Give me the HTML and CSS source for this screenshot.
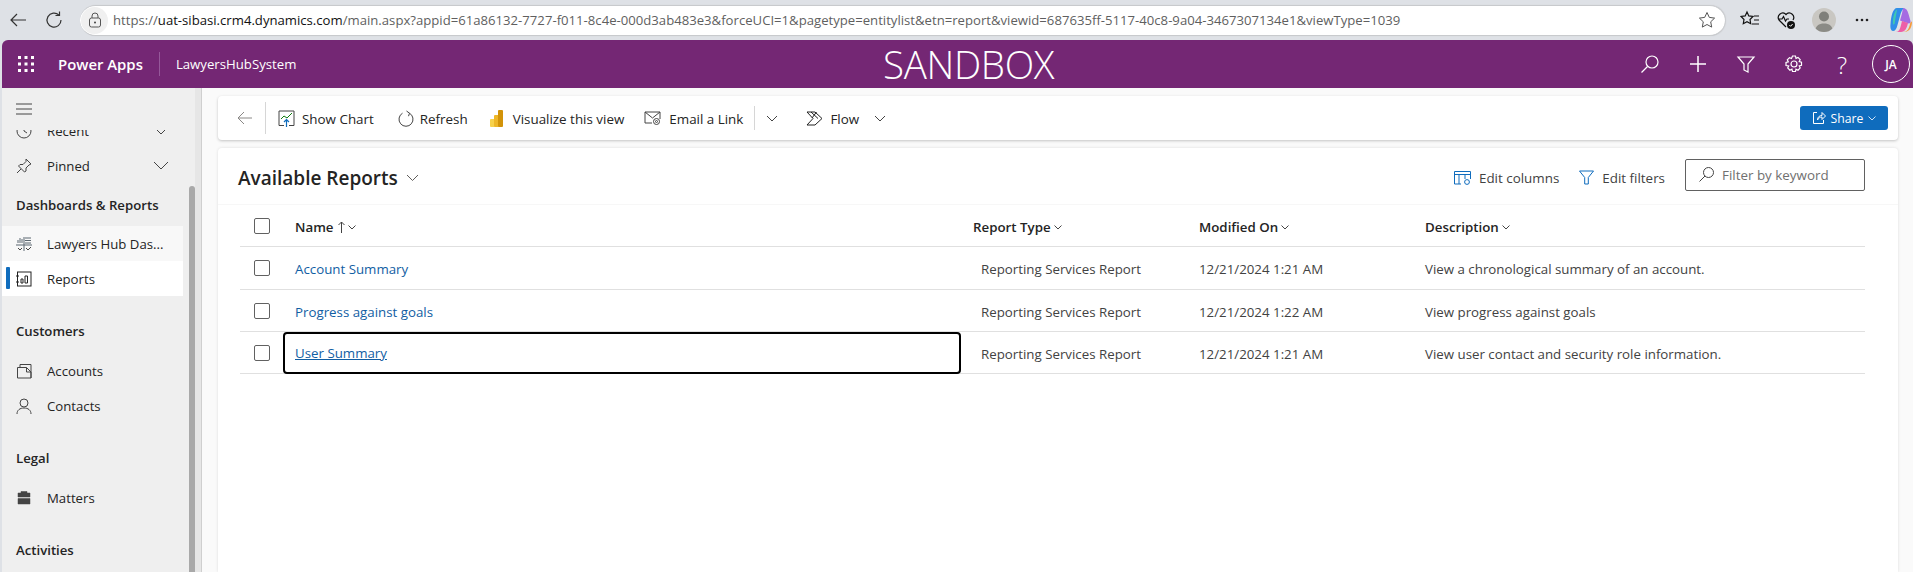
FILE: index.html
```html
<!DOCTYPE html>
<html lang="en">
<head>
<meta charset="utf-8">
<title>Available Reports</title>
<link rel="stylesheet" href="styles.css">
</head>
<body>
<div class="browser">
  <svg class="bicon back" width="20" height="20" viewBox="0 0 20 20"><path d="M18 10H3M9 4l-6 6 6 6" class="ln"/></svg>
  <svg class="bicon reload" width="20" height="20" viewBox="0 0 20 20"><path d="M15 5.200A7 7 0 1 0 17 10M15.500 1.500v4h-4" class="ln"/></svg>
  <div class="address">
    <span class="lockwrap"><svg width="14" height="16" viewBox="0 0 14 16"><rect x="1.500" y="6" width="11" height="9" rx="2" class="ln1"/><path d="M4 6V4a3 3 0 0 1 6 0v2" class="ln1"/><circle cx="7" cy="10.500" r="1" fill="#444"/></svg></span>
    <span class="url"><span class="dim">https://</span>uat-sibasi.crm4.dynamics.com<span class="dim">/main.aspx?appid=61a86132-7727-f011-8c4e-000d3ab483e3&amp;forceUCI=1&amp;pagetype=entitylist&amp;etn=report&amp;viewid=687635ff-5117-40c8-9a04-3467307134e1&amp;viewType=1039</span></span>
    <svg class="star" width="18" height="18" viewBox="0 0 18 18"><path d="M9 1.500l2.300 4.900 5.300.7-3.900 3.700 1 5.300L9 13.500l-4.700 2.600 1-5.300-3.900-3.700 5.300-.7z" class="ln1"/></svg>
  </div>
  <div class="tools">
    <svg width="20" height="20" viewBox="0 0 20 20"><path d="M7 2l1.800 3.900 4.200.6-3 3 .7 4.200L7 11.700l-3.700 2 .7-4.200-3-3 4.200-.6z" class="ln2"/><path d="M14 6h5M14 10h5M12 14h7" class="ln2"/></svg>
    <svg width="20" height="20" viewBox="0 0 20 20"><path d="M10 17L3 10a4.500 4.500 0 0 1 6.500-6l.5.600.5-.6A4.500 4.500 0 0 1 17 10M2 9h4l1.500-2.500 2 4.500 1.500-2h2" class="ln2"/><circle cx="15" cy="15" r="4" fill="#111"/><path d="M13.300 15l1.300 1.300 2-2.300" stroke="#fff" fill="none"/></svg>
    <span class="profile"><svg width="24" height="24" viewBox="0 0 24 24"><circle cx="12" cy="8.500" r="5" fill="#7f7f7a"/><path d="M3 24c0-6 4-8.500 9-8.500s9 2.500 9 8.500z" fill="#8b8b86"/></svg></span>
    <svg class="dots" width="14" height="4" viewBox="0 0 14 4" fill="#222"><circle cx="2" cy="2" r="1.300"/><circle cx="7" cy="2" r="1.300"/><circle cx="12" cy="2" r="1.300"/></svg>
    <svg class="copilot" width="22" height="26" viewBox="0 0 22 26"><path d="M7 1h8c-3 1-4 4-5 8l-2.500 9c-1 4-2.500 6-4.500 6-2 0-3-3-2.500-7C1 9 3 1 7 1z" fill="#2f8ee8"/><path d="M3 17C2.500 11 4.500 4 7 2.500 6.500 6 5.500 11 4.800 16c-.3 1.500-1.500 2-1.800 1z" fill="#3fc7b0"/><path d="M13 1c3 0 4.500 2 5.500 6l2 7c.5 2.500-1.500 3-3.500 2l-7-2.500 2-7c.6-3 1-5.500 1-5.500z" fill="#a56be2"/><path d="M8 25h5c4 0 6-3 7-8 .4-1.500 1-2.500 2-2.500 0 5-2 10.500-8 10.500z" fill="#f59a3c"/><path d="M6 25c3 0 4-3 5-7l1-4 6 2c-1 5-3 9-7 9z" fill="#ee5fa7"/></svg>
  </div>
</div>

<header class="appbar">
  <svg class="waffle" width="16" height="16" viewBox="0 0 16 16" fill="#fff"><rect x="0" y="0" width="3" height="3"/><rect x="6.500" y="0" width="3" height="3"/><rect x="13" y="0" width="3" height="3"/><rect x="0" y="6.500" width="3" height="3"/><rect x="6.500" y="6.500" width="3" height="3"/><rect x="13" y="6.500" width="3" height="3"/><rect x="0" y="13" width="3" height="3"/><rect x="6.500" y="13" width="3" height="3"/><rect x="13" y="13" width="3" height="3"/></svg>
  <span class="brand">Power Apps</span>
  <span class="brand-sep"></span>
  <span class="appname">LawyersHubSystem</span>
  <span class="sandbox">SANDBOX</span>
  <div class="appicons">
    <svg width="20" height="20" viewBox="0 0 20 20"><circle cx="12" cy="8" r="6" class="wl"/><path d="M7.500 12.500L1.500 18.500" class="wl"/></svg>
    <svg width="20" height="20" viewBox="0 0 20 20"><path d="M10 2v16M2 10h16" class="wl2"/></svg>
    <svg width="20" height="20" viewBox="0 0 20 20"><path d="M2 3h16l-6 7v8l-4-2v-6z" class="wl"/></svg>
    <svg width="20" height="20" viewBox="0 0 20 20"><circle cx="10" cy="10" r="3" class="wl"/><path d="M8.500 2h3l.5 2.300 2-.9 2.200 2.200-1 2 2.300.7v3l-2.300.6 1 2.100-2.200 2.200-2-1-.5 2.300h-3l-.6-2.300-2 1-2.200-2.200 1-2.100L2 11.500v-3l2.300-.7-1-2 2.200-2.200 2 .9z" class="wl"/></svg>
    <span class="qmark">?</span>
    <span class="avatar">JA</span>
  </div>
</header>

<div class="shell">
  <aside class="sidebar">
    <div class="burger"><svg width="16" height="12" viewBox="0 0 16 12"><path d="M0 1h16M0 6h16M0 11h16" stroke="#444" fill="none"/></svg></div>
    <nav class="navclip">
      <div class="navlist">
        <div class="navitem"><svg class="ni" width="16" height="16" viewBox="0 0 16 16"><circle cx="8" cy="8" r="7" class="dk"/><path d="M8 4v4l3 2" class="dk"/></svg><span class="nt">Recent</span><svg class="nchev big" width="16" height="9" viewBox="0 0 16 9"><path d="M1 1l7 7 7-7" class="dk"/></svg></div>
        <div class="navitem"><svg class="ni" width="16" height="16" viewBox="0 0 16 16"><path d="M10 1l5 5-2 1-3 3v3l-1.500 1-6-6L4 6.500h3l3-3zM5 11l-4 4" class="dk"/></svg><span class="nt">Pinned</span><svg class="nchev big" width="16" height="9" viewBox="0 0 16 9"><path d="M1 1l7 7 7-7" class="dk"/></svg></div>
        <h3 class="navhead first">Dashboards &amp; Reports</h3>
        <div class="navitem hover"><svg class="ni" width="16" height="16" viewBox="0 0 16 16"><path d="M2 4v3M4 2v5M6 3v4M9 2h6M9 4.500h6M9 7h6M0 9h16M8 1v14" class="bar"/><path d="M2 12l2 2 2-2M10 12l2 2 3-3" class="dk"/></svg><span class="nt">Lawyers Hub Das...</span></div>
        <div class="navitem active"><svg class="ni" width="16" height="16" viewBox="0 0 16 16"><rect x="1.500" y="1" width="13.500" height="14" class="bk"/><path d="M5 8h2v4H5zM9 5h2.500v7H9zM0 5h3M0 11h3" class="bk"/></svg><span class="nt">Reports</span></div>
        <h3 class="navhead">Customers</h3>
        <div class="navitem"><svg class="ni" width="16" height="16" viewBox="0 0 16 16"><path d="M1.500 4.500h9L15 9v6H1.500zM4 4.500V1.500h11V15M10.500 4.500V9H15" class="dk"/></svg><span class="nt">Accounts</span></div>
        <div class="navitem"><svg class="ni" width="16" height="16" viewBox="0 0 16 16"><circle cx="8" cy="5" r="4" class="dk"/><path d="M1 16c0-4 3-6 7-6s7 2 7 6" class="dk"/></svg><span class="nt">Contacts</span></div>
        <h3 class="navhead">Legal</h3>
        <div class="navitem"><svg class="ni" width="16" height="16" viewBox="0 0 16 16"><path d="M5 3V1.500h6V3h3v4H2V3zM2 8.500h12V14H2z" fill="#444" stroke="#444" stroke-width=".5"/></svg><span class="nt">Matters</span></div>
        <h3 class="navhead">Activities</h3>
      </div>
    </nav>
    <div class="scrollthumb"></div>
  </aside>

  <main class="content">
    <section class="cmdbar">
      <svg class="cback" width="16" height="16" viewBox="0 0 16 16"><path d="M15 8H1M7 2L1 8l6 6" stroke="#8a8886" fill="none"/></svg>
      <span class="csep first"></span>
      <div class="cmd show"><svg width="17" height="17" viewBox="0 0 17 17"><path d="M6 15.500H1V1h15v14.500h-5" class="dk"/><path d="M3 9l3-3 3 2 5-5" stroke="#107c10" fill="none"/><path d="M8.500 17V10M6 12l2.500-2.500L11 12" stroke="#0f6cbd" fill="none" stroke-width="1.200"/></svg><span>Show Chart</span></div>
      <div class="cmd refresh"><svg width="16" height="17" viewBox="0 0 16 17"><path d="M4.500 3.200A7 7 0 1 0 11.500 3.200M8.500 1l3 2.200-1 3" class="dk"/></svg><span>Refresh</span></div>
      <div class="cmd viz"><svg width="13" height="17" viewBox="0 0 13 17"><rect x="0" y="9" width="5" height="8" rx="1" fill="#f7d24c"/><rect x="4" y="5" width="5" height="12" rx="1" fill="#eeb728"/><rect x="8" y="0" width="5" height="17" rx="1" fill="#d29309"/></svg><span>Visualize this view</span></div>
      <div class="cmd email"><svg width="17" height="16" viewBox="0 0 17 16"><path d="M8 13H1V2h15v7M1 2l7.500 6L16 2" class="dk"/><circle cx="12.500" cy="11.500" r="3" class="dk"/><circle cx="12.500" cy="11.500" r="1" class="dk"/></svg><span>Email a Link</span></div>
      <span class="csep second"></span>
      <svg class="cchev one" width="12" height="7" viewBox="0 0 12 7"><path d="M1 1l5 5 5-5" class="dk"/></svg>
      <div class="cmd flow"><svg width="17" height="15" viewBox="0 0 17 15"><path d="M1 1h8l7 6.500-7 6.500H1l6-6.500zM5 1l7 6.500M10.500 1L6 7" class="bk"/></svg><span>Flow</span></div>
      <svg class="cchev" width="12" height="7" viewBox="0 0 12 7"><path d="M1 1l5 5 5-5" class="dk"/></svg>
      <button class="share"><svg width="14" height="14" viewBox="0 0 14 14"><path d="M5 1.500H1.500v11h10V9M5.500 9c0-3 2-4.500 4.500-4.500V1.500L13.500 5 10 8.500V6C8 6 6.500 7 5.500 9z" stroke="#fff" fill="none"/></svg><span>Share</span><svg width="8" height="5" viewBox="0 0 8 5"><path d="M.5.500L4 4l3.500-3.500" stroke="#cfe2f5" fill="none"/></svg></button>
    </section>

    <section class="listcard">
      <div class="titlebar">
        <h1>Available Reports</h1>
        <svg class="tchev" width="13" height="8" viewBox="0 0 13 8"><path d="M1 1l5.500 5.500L12 1" stroke="#605e5c" fill="none"/></svg>
        <div class="tactions">
          <span class="act"><svg width="17" height="14" viewBox="0 0 17 14"><path d="M7 13H.5V.5h16V8M.5 3.500h16M5 3.500V13M11 3.500V8" class="bl"/><circle cx="13" cy="11" r="2.400" class="bl"/></svg>Edit columns</span>
          <span class="act"><svg width="15" height="15" viewBox="0 0 15 15"><path d="M.5 1h14l-5.200 6.500V14H5.700V7.500z" class="bl"/></svg>Edit filters</span>
          <div class="filterbox"><svg width="15" height="15" viewBox="0 0 15 15"><circle cx="9.500" cy="5.500" r="5" class="dk"/><path d="M6 9L.5 14.500" class="dk"/></svg><span>Filter by keyword</span></div>
        </div>
      </div>

      <div class="grid">
        <div class="row head">
          <div class="c-check"><span class="box"></span></div>
          <div class="c-name">Name<svg class="arrow" width="7" height="12" viewBox="0 0 7 12"><path d="M3.500 12V1M.5 4l3-3 3 3" stroke="#424242" fill="none"/></svg><svg class="hchev" width="8" height="5" viewBox="0 0 8 5"><path d="M.5.500L4 4l3.500-3.500" class="dk"/></svg></div>
          <div class="c-cell">Report Type<svg class="hchev" width="8" height="5" viewBox="0 0 8 5"><path d="M.5.500L4 4l3.500-3.500" class="dk"/></svg></div>
          <div class="c-cell">Modified On<svg class="hchev" width="8" height="5" viewBox="0 0 8 5"><path d="M.5.500L4 4l3.500-3.500" class="dk"/></svg></div>
          <div class="c-cell">Description<svg class="hchev" width="8" height="5" viewBox="0 0 8 5"><path d="M.5.500L4 4l3.500-3.500" class="dk"/></svg></div>
        </div>
        <div class="row">
          <div class="c-check"><span class="box"></span></div>
          <div class="c-name"><a class="link">Account Summary</a></div>
          <div class="c-cell type">Reporting Services Report</div>
          <div class="c-cell">12/21/2024 1:21 AM</div>
          <div class="c-cell">View a chronological summary of an account.</div>
        </div>
        <div class="row">
          <div class="c-check"><span class="box"></span></div>
          <div class="c-name"><a class="link">Progress against goals</a></div>
          <div class="c-cell type">Reporting Services Report</div>
          <div class="c-cell">12/21/2024 1:22 AM</div>
          <div class="c-cell">View progress against goals</div>
        </div>
        <div class="row">
          <div class="c-check"><span class="box"></span></div>
          <div class="c-name focus"><a class="link under">User Summary</a></div>
          <div class="c-cell type">Reporting Services Report</div>
          <div class="c-cell">12/21/2024 1:21 AM</div>
          <div class="c-cell">View user contact and security role information.</div>
        </div>
      </div>
    </section>
  </main>
</div>
</body>
</html>
```
FILE: styles.css
```css
* { box-sizing: border-box; }
html, body { margin: 0; height: 100%; overflow: hidden; }
body {
  width: 1913px; height: 572px; background: #dee1e6;
  font-family: "Open Sans", "Noto Sans", sans-serif; font-size: 13px; color: #242424;
  display: flex; flex-direction: column;
}
svg { display: block; flex: none; }
.ln { stroke: #333; stroke-width: 1.2; fill: none; }
.ln1 { stroke: #555; stroke-width: 1; fill: none; }
.ln2 { stroke: #111; stroke-width: 1.2; fill: none; }
.wl { stroke: #fff; stroke-width: 1.2; fill: none; }
.wl2 { stroke: #fff; stroke-width: 1.5; fill: none; }
.dk { stroke: #444; stroke-width: 1; fill: none; }
.bk { stroke: #222; stroke-width: 1; fill: none; }
.bl { stroke: #0f6cbd; stroke-width: 1; fill: none; }
.bar { stroke: #5b6770; stroke-width: 1; fill: none; }

/* browser chrome */
.browser { height: 40px; flex: none; display: flex; align-items: center; padding-left: 8px; }
.bicon.back { margin-right: 16px; }
.bicon.reload { margin-right: 16px; }
.address {
  width: 1645px; height: 31px; background: #fff; border-radius: 16px;
  border-bottom: 1px solid #c8cacd; border-top: 1px solid #c8cacd;
  display: flex; align-items: center; padding-right: 9px;
  box-shadow: 1px 0 1px #c8cacd;
}
.lockwrap { width: 27px; height: 27px; margin-left: 1px; border-radius: 50%; background: #f0f0f0; display: flex; align-items: center; justify-content: center; flex: none; }
.url { margin-left: 5px; font-size: 13.150px; color: #111; white-space: nowrap; flex: 1; }
.dim { color: #5f5f5f; }
.tools { display: flex; align-items: center; margin-left: 15px; gap: 16px; }
.profile { width: 24px; height: 24px; border-radius: 50%; background: #c9c7c2; overflow: hidden; }
.dots { margin: 0 3px; }
.copilot { margin-left: 2px; }

/* purple header */
.appbar {
  height: 48px; flex: none; margin-left: 2px; background: #742774; color: #fff;
  border-radius: 6px 6px 0 0; display: flex; align-items: center; padding-left: 16px; position: relative;
}
.brand { margin-left: 24px; font-size: 14.900px; font-weight: 600; }
.brand-sep { width: 1px; height: 24px; background: #95589a; margin: 0 16px; }
.appname { font-size: 13.200px; }
.sandbox { position: absolute; left: 881px; top: 0; line-height: 48px; font-size: 38.500px; font-weight: 300; letter-spacing: -.3px; }
.appicons { margin-left: auto; margin-right: -1px; display: flex; align-items: center; }
.appicons svg { margin-right: 28px; }
.qmark { width: 20px; text-align: center; font-size: 24px; font-weight: 300; margin-right: 20px; }
.avatar { width: 38px; height: 38px; margin-right: 4px; border: 1px solid #fff; border-radius: 50%; display: flex; align-items: center; justify-content: center; font-size: 12px; font-weight: 600; }

/* shell */
.shell { flex: 1; display: flex; margin-left: 2px; min-height: 0; background: #fafafa; }
.sidebar { width: 200px; flex: none; background: #efefef; border-right: 1px solid #cfcfcf; position: relative; display: flex; flex-direction: column; box-shadow: inset -6px 0 0 #e6e6e6; }
.burger { height: 42px; flex: none; padding: 15px 0 0 14px; }
.navclip { flex: 1; overflow: hidden; }
.navlist { margin-top: -17px; width: 181px; }
.navitem { height: 35px; display: flex; align-items: center; padding-left: 14px; font-size: 13.200px; position: relative; color: #242424; }
.navitem.hover { background: #f8f8f8; }
.navitem.active { background: #fff; }
.navitem.active::before { content: ""; position: absolute; left: 4px; top: 6px; width: 4px; height: 22px; background: #0f6cbd; border-radius: 1px; }
.ni { margin-right: 15px; }
.nt { flex: 1; }
.nchev.big { margin-right: 14px; }
.navhead { margin: 0; padding: 25px 0 12px 14px; height: 57px; font-size: 13.200px; line-height: 20px; font-weight: 600; color: #242424; }
.navhead.first { height: 43px; padding-top: 12px; padding-bottom: 11px; }
.scrollthumb { position: absolute; left: 187px; top: 98px; bottom: 0; width: 6px; background: #a9a9a9; border-radius: 3px 3px 0 0; }

/* content */
.content { flex: 1; padding: 8px 15px 0 16px; display: flex; flex-direction: column; gap: 8px; min-width: 0; }
.cmdbar { height: 44px; flex: none; background: #fff; border-radius: 4px; box-shadow: 0 1px 3px rgba(0,0,0,.22); display: flex; align-items: center; padding-left: 19px; padding-right: 10px; font-size: 13.400px; }
.csep { width: 1px; background: #d6d6d6; height: 32px; }
.csep.first { margin: 0 12px 0 12px; }
.csep.second { height: 24px; margin: 0 11px 0 11px; }
.cmd { display: flex; align-items: center; gap: 7px; white-space: nowrap; }
.cmd span { padding-top: 2px; }
.cmd.refresh { margin-left: 24px; gap: 6px; }
.cmd.viz { margin-left: 22px; gap: 10px; }
.cmd.email { margin-left: 20px; gap: 8px; }
.cmd.flow { margin-left: 28px; gap: 7px; }
.cchev { margin-left: 15px; }
.cchev.one { margin-left: 0; }
.share { margin-left: auto; width: 88px; height: 24px; border: 0; border-radius: 3px; background: #0f6cbd; color: #fff; font: inherit; font-size: 12.200px; display: flex; align-items: center; justify-content: center; gap: 5px; padding: 0; }

.listcard { flex: 1; background: #fff; border-radius: 4px 4px 0 0; box-shadow: 0 0 3px rgba(0,0,0,.12); min-height: 0; }
.titlebar { height: 57px; display: flex; align-items: center; padding: 3px 33px 0 20px; border-bottom: 1px solid #f7f7f7; }
h1 { margin: 0; font-size: 19px; font-weight: 600; color: #242424; }
.tchev { margin-left: 8px; }
.tactions { margin-left: auto; display: flex; align-items: center; gap: 20px; color: #424242; font-size: 13.400px; }
.act { display: flex; align-items: center; gap: 8px; white-space: nowrap; }
.filterbox { width: 180px; height: 32px; border: 1px solid #616161; border-radius: 2px; display: flex; align-items: center; gap: 8px; padding-left: 13px; color: #707070; margin-top: -6px; }

.grid { margin: 0 33px 0 22px; }
.row { display: grid; grid-template-columns: 43px 678px 226px 226px 1fr; height: 42px; border-bottom: 1px solid #e0e0e0; align-items: center; font-size: 13.300px; color: #424242; }
.row:nth-child(2) { height: 43px; }
.row.head { font-weight: 600; color: #242424; }
.c-check { padding-left: 14px; display: flex; }
.box { width: 16px; height: 16px; border: 1px solid #616161; border-radius: 2px; background: #fff; }
.c-name { padding: 2px 0 0 12px; display: flex; align-items: center; height: 100%; }
.c-cell { padding: 2px 0 0 12px; display: flex; align-items: center; white-space: nowrap; }
.c-cell.type { padding-left: 20px; }
.arrow { margin-left: 5px; }
.hchev { margin-left: 3px; margin-top: 1px; }
.link { color: #115ea3; }
.link.under { text-decoration: underline; }
.focus { border: 2px solid #000; border-radius: 4px; padding: 0 0 0 10px; height: 42px; }
```
